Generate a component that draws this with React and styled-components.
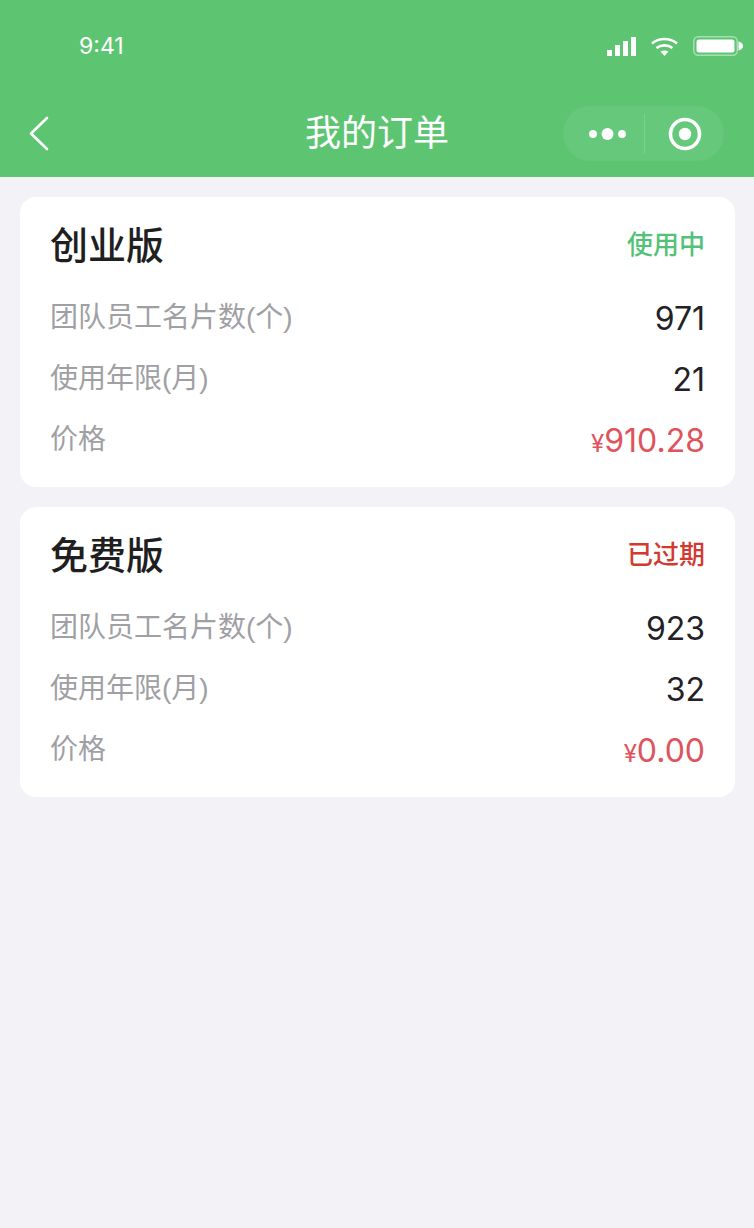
import React from 'react';
import styled, { createGlobalStyle } from 'styled-components';

const GlobalStyle = createGlobalStyle`
  html, body {
    margin: 0;
    padding: 0;
    background: #f3f2f6;
    font-family: "Liberation Sans", "Noto Sans CJK SC", sans-serif;
  }
`;

const Page = styled.div`
  width: 754px;
  height: 1228px;
  overflow: hidden;
  background: #f3f2f6;
`;

const Header = styled.header`
  height: 177px;
  background: #5dc572;
  color: #fff;
`;

const StatusBar = styled.div`
  height: 92px;
  display: flex;
  align-items: center;
  justify-content: space-between;
  padding: 0 11px 0 79px;
`;

const Time = styled.span`
  font-family: "Inter", "Liberation Sans", sans-serif;
  font-size: 23px;
`;

const StatusIcons = styled.div`
  display: flex;
  align-items: center;
  gap: 15px;
`;

const NavBar = styled.div`
  height: 85px;
  display: flex;
  align-items: flex-start;
  justify-content: space-between;
  padding: 14px 30px 0 28px;
  position: relative;
`;

const BackButton = styled.div`
  height: 55px;
  display: flex;
  align-items: center;
`;

const NavTitle = styled.h1`
  position: absolute;
  left: 0;
  right: 0;
  top: 17px;
  margin: 0;
  text-align: center;
  font-size: 36px;
  line-height: 50px;
  font-weight: 400;
`;

const Capsule = styled.div`
  width: 161px;
  height: 55px;
  border-radius: 28px;
  background: rgba(255, 255, 255, 0.06);
  display: flex;
  align-items: center;
`;

const CapsuleSide = styled.div`
  width: ${(p) => p.$width}px;
  height: 100%;
  box-sizing: border-box;
  padding-left: ${(p) => p.$inset || 0}px;
  display: flex;
  align-items: center;
  justify-content: center;
`;

const CapsuleLine = styled.div`
  width: 1px;
  height: 40px;
  background: rgba(255, 255, 255, 0.16);
`;

const List = styled.main`
  display: flex;
  flex-direction: column;
  gap: 20px;
  padding: 20px 19px 0 20px;
`;

const Card = styled.section`
  height: 290px;
  box-sizing: border-box;
  background: #fff;
  border-radius: 16px;
  padding: 15px 30px 0 30px;
`;

const CardHead = styled.div`
  display: flex;
  align-items: center;
  justify-content: space-between;
  height: 60px;
  margin-bottom: 16px;
`;

const Row = styled.div`
  display: flex;
  align-items: center;
  justify-content: space-between;
  height: 61px;
`;

const PlanName = styled.h2`
  margin: 0;
  font-size: 38px;
  font-weight: 500;
  color: #1f1f1f;
`;

const Status = styled.span`
  font-size: 26px;
  font-weight: 500;
  color: ${(p) => (p.$expired ? '#d13a30' : '#53c278')};
`;

const Label = styled.span`
  font-size: 28px;
  color: #a0a0a4;
  padding-bottom: 8px;
`;

const Value = styled.span`
  font-family: "Inter", "Liberation Sans", sans-serif;
  font-size: 32px;
  color: #222226;
`;

const Price = styled.span`
  font-family: "Inter", "Liberation Sans", sans-serif;
  font-size: 32px;
  color: #e0525c;
  display: flex;
  align-items: baseline;
`;

const Yen = styled.span`
  font-size: 24px;
`;

const orders = [
  { name: '创业版', status: '使用中', staff: '971', years: '21', price: '910.28' },
  { name: '免费版', status: '已过期', expired: true, staff: '923', years: '32', price: '0.00' },
];

function SignalIcon() {
  return (
    <svg width="29" height="19" viewBox="0 0 29 19" fill="#fff">
      <rect x="0" y="13" width="5" height="6" />
      <rect x="8" y="8" width="5" height="11" />
      <rect x="16" y="4" width="5" height="15" />
      <rect x="24" y="0" width="5" height="19" />
    </svg>
  );
}

function WifiIcon() {
  return (
    <svg width="27" height="19" viewBox="0 0 27 19" fill="none" stroke="#fff" strokeWidth="2.6">
      <path d="M1 6.5 C8 0.5 19 0.5 26 6.5" />
      <path d="M5.5 11 C10 7.5 17 7.5 21.5 11" />
      <path d="M9.5 14.5 L13.5 19 L17.5 14.5 C15 13 12 13 9.5 14.5 Z" fill="#fff" stroke="none" />
    </svg>
  );
}

function BatteryIcon() {
  return (
    <svg width="50" height="20" viewBox="0 0 50 20" fill="none">
      <rect x="0.75" y="0.75" width="43.5" height="18.5" rx="4.5" stroke="#fff" strokeOpacity="0.45" strokeWidth="1.5" />
      <rect x="3.5" y="3.5" width="38" height="13" rx="2.5" fill="#fff" />
      <path d="M45.5 5.5 C48.5 6 50 8 50 10 C50 12 48.5 14 45.5 14.5 Z" fill="#fff" />
    </svg>
  );
}

function BackIcon() {
  return (
    <svg width="21" height="35" viewBox="0 0 21 35" fill="none" stroke="#fff" strokeWidth="2.6" strokeLinecap="round" strokeLinejoin="round">
      <path d="M19 2 L3 17.5 L19 33" />
    </svg>
  );
}

function DotsIcon() {
  return (
    <svg width="37" height="14" viewBox="0 0 37 14" fill="#fff">
      <circle cx="4" cy="7" r="3.9" />
      <circle cx="18.5" cy="7" r="6" />
      <circle cx="33" cy="7" r="3.9" />
    </svg>
  );
}

function RecordIcon() {
  return (
    <svg width="34" height="34" viewBox="0 0 34 34" fill="none">
      <circle cx="17" cy="17" r="14.5" stroke="#fff" strokeWidth="3.6" />
      <circle cx="17" cy="17" r="6.2" fill="#fff" />
    </svg>
  );
}

function OrderCard({ order }) {
  return (
    <Card>
      <CardHead>
        <PlanName>{order.name}</PlanName>
        <Status $expired={order.expired}>{order.status}</Status>
      </CardHead>
      <Row>
        <Label>团队员工名片数(个)</Label>
        <Value>{order.staff}</Value>
      </Row>
      <Row>
        <Label>使用年限(月)</Label>
        <Value>{order.years}</Value>
      </Row>
      <Row>
        <Label>价格</Label>
        <Price>
          <Yen>¥</Yen>
          {order.price}
        </Price>
      </Row>
    </Card>
  );
}

export default function App() {
  return (
    <Page>
      <GlobalStyle />
      <Header>
        <StatusBar>
          <Time>9:41</Time>
          <StatusIcons>
            <SignalIcon />
            <WifiIcon />
            <BatteryIcon />
          </StatusIcons>
        </StatusBar>
        <NavBar>
          <BackButton>
            <BackIcon />
          </BackButton>
          <NavTitle>我的订单</NavTitle>
          <Capsule>
            <CapsuleSide $width={81} $inset={7}>
              <DotsIcon />
            </CapsuleSide>
            <CapsuleLine />
            <CapsuleSide $width={79}>
              <RecordIcon />
            </CapsuleSide>
          </Capsule>
        </NavBar>
      </Header>
      <List>
        {orders.map((order) => (
          <OrderCard key={order.name} order={order} />
        ))}
      </List>
    </Page>
  );
}
